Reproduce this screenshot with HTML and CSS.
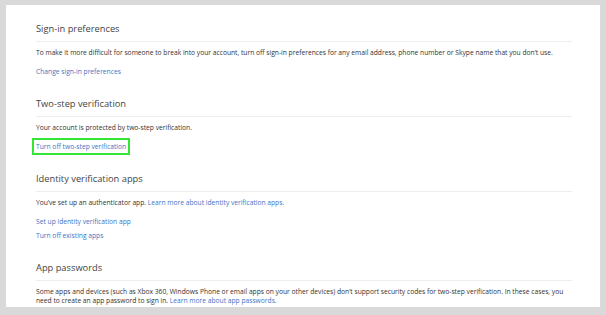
FILE: index.html
```html
<!DOCTYPE html>
<html lang="en">
<head>
    <meta charset="UTF-8">
    <title>Security settings</title>
    <link rel="stylesheet" href="styles.css">
</head>
<body>
    <div class="panel">
        <!-- Sign-in preferences -->
        <section class="section">
            <h2>Sign-in preferences</h2>
            <p>To make it more difficult for someone to break into your account, turn off sign-in preferences for any email address, phone number or Skype name that you don’t use.</p>
            <a class="link" href="#">Change sign-in preferences</a>
        </section>

        <!-- Two-step verification -->
        <section class="section">
            <h2>Two-step verification</h2>
            <p>Your account is protected by two-step verification.</p>
            <a class="link highlight" href="#">Turn off two-step verification</a>
        </section>

        <!-- Identity verification apps -->
        <section class="section">
            <h2>Identity verification apps</h2>
            <p>You’ve set up an authenticator app. <a href="#">Learn more about identity verification apps.</a></p>
            <a class="link" href="#">Set up identity verification app</a>
            <a class="link" href="#">Turn off existing apps</a>
        </section>

        <!-- App passwords -->
        <section class="section">
            <h2>App passwords</h2>
            <p>Some apps and devices (such as Xbox 360, Windows Phone or email apps on your other devices) don’t support security codes for two-step verification. In these cases, you need to create an app password to sign in. <a href="#">Learn more about app passwords.</a></p>
        </section>
    </div>
</body>
</html>
```

FILE: styles.css
```css
/* Main Styles */
html, body {
    height: 100%;
}
body {
    margin: 0;
    background-color: #d9d9d9;
    font-family: "Open Sans", "Noto Sans", sans-serif;
    color: #333333;
    padding: 5px 6px 8px 6px;
    box-sizing: border-box;
    overflow: hidden;
}
.panel {
    background-color: #ffffff;
    height: 100%;
    padding: 17px 28px 0 30px;
    box-sizing: border-box;
    overflow: hidden;
}
.section {
    margin-bottom: 21px;
}
.section h2 {
    font-size: 9.3px;
    font-weight: normal;
    color: #444444;
    margin: 0;
    padding-bottom: 5px;
    border-bottom: 1px solid #eeeeee;
    line-height: 14px;
}
.section p {
    font-size: 6.7px;
    line-height: 9px;
    margin: 6px 0 0 0;
}
a {
    color: #4274c4;
    text-decoration: none;
}
.link {
    display: block;
    width: fit-content;
    font-size: 6.7px;
    line-height: 9px;
    margin-top: 10px;
}
.link + .link {
    margin-top: 5px;
}
.highlight {
    outline: 2px solid #33e633;
    outline-offset: 2px;
}
```
